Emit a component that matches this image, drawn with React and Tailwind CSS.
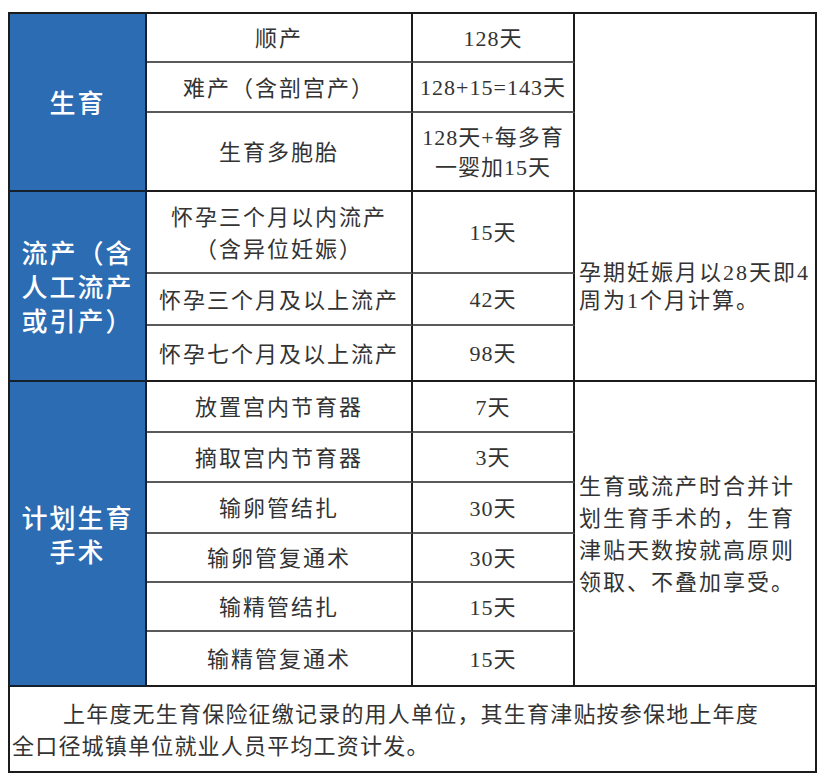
import React from "react";

function Blue({ children, span }) {
  return (
    <div
      className={`${span} flex items-center justify-center bg-[#2c6cb3] border-r-2 border-b-2 border-[#15202e] text-white text-[26px] leading-[34px] tracking-[2px] text-center font-medium font-['Noto_Sans_CJK_SC',sans-serif]`}
    >
      {children}
    </div>
  );
}

function Item({ children, last }) {
  return (
    <div
      className={`flex items-center justify-center text-center border-r-2 border-[#1c1c1c] ${last ? "border-b-2 border-b-[#1c1c1c]" : "border-b-2 border-b-[#5a5a5a]"} pt-[3px] text-[22px] tracking-[2px] leading-[32px] text-[#333] font-['Liberation_Serif','Noto_Sans_CJK_SC',serif]`}
    >
      <div>{children}</div>
    </div>
  );
}

function Days({ children, last }) {
  return (
    <div
      className={`flex items-center justify-center text-center border-r-2 border-[#1c1c1c] ${last ? "border-b-2 border-b-[#1c1c1c]" : "border-b-2 border-b-[#5a5a5a]"} pt-[2px] text-[22px] tracking-[1px] leading-[30px] text-[#333] font-['Liberation_Serif','Noto_Sans_CJK_SC',serif]`}
    >
      <div>{children}</div>
    </div>
  );
}

function Note({ children, span, lh }) {
  return (
    <div
      className={`${span} flex items-center border-b-2 border-[#1c1c1c] pl-[4px] pt-[2px] text-[22px] tracking-[2px] ${lh} text-[#333] font-['Liberation_Serif','Noto_Sans_CJK_SC',serif]`}
    >
      <div>{children}</div>
    </div>
  );
}

export default function App() {
  return (
    <div className="w-[824px] h-[784px] bg-white pt-[12px] pl-[8px]">
      <div className="grid w-[809px] border-2 border-[#1c1c1c] bg-white grid-cols-[137px_266px_162px_240px] grid-rows-[49px_50px_79px_82px_52px_56px_51px_50px_51px_49px_49px_55px_84px]">
        <Blue span="row-span-3">生育</Blue>
        <Item>顺产</Item>
        <Days>128天</Days>
        <div className="row-span-3 border-b-2 border-[#1c1c1c]"></div>
        <Item>难产（含剖宫产）</Item>
        <Days>128+15=143天</Days>
        <Item last>生育多胞胎</Item>
        <Days last>
          128天+每多育
          <br />
          一婴加15天
        </Days>

        <Blue span="row-span-3">
          <div>
            流产（含
            <br />
            人工流产
            <br />
            或引产）
          </div>
        </Blue>
        <Item>
          怀孕三个月以内流产
          <br />
          （含异位妊娠）
        </Item>
        <Days>15天</Days>
        <Note span="row-span-3" lh="leading-[28px]">
          孕期妊娠月以28天即4
          <br />
          周为1个月计算。
        </Note>
        <Item>怀孕三个月及以上流产</Item>
        <Days>42天</Days>
        <Item last>怀孕七个月及以上流产</Item>
        <Days last>98天</Days>

        <Blue span="row-span-6">
          <div>
            计划生育
            <br />
            手术
          </div>
        </Blue>
        <Item>放置宫内节育器</Item>
        <Days>7天</Days>
        <Note span="row-span-6" lh="leading-[32px]">
          生育或流产时合并计
          <br />
          划生育手术的，生育
          <br />
          津贴天数按就高原则
          <br />
          领取、不叠加享受。
        </Note>
        <Item>摘取宫内节育器</Item>
        <Days>3天</Days>
        <Item>输卵管结扎</Item>
        <Days>30天</Days>
        <Item>输卵管复通术</Item>
        <Days>30天</Days>
        <Item>输精管结扎</Item>
        <Days>15天</Days>
        <Item last>输精管复通术</Item>
        <Days last>15天</Days>

        <div className="col-span-4 flex items-center pl-[2px] pt-[4px] text-[22px] tracking-[1.2px] leading-[32px] text-[#333] font-['Liberation_Serif','Noto_Sans_CJK_SC',serif]">
          <div>
            <span className="inline-block w-[51px]"></span>
            上年度无生育保险征缴记录的用人单位，其生育津贴按参保地上年度
            <br />
            全口径城镇单位就业人员平均工资计发。
          </div>
        </div>
      </div>
    </div>
  );
}
